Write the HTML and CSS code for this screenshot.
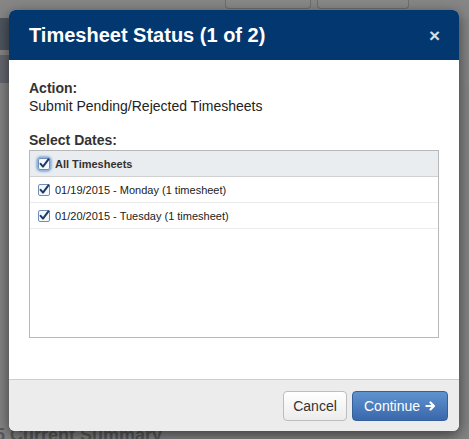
FILE: index.html
```html
<!DOCTYPE html>
<html>
<head>
<meta charset="utf-8">
<link rel="stylesheet" href="styles.css">
</head>
<body>
<div class="page">
  <div class="topbar">
    <span class="bgbtn bgbtn1"></span>
    <span class="bgbtn bgbtn2"></span>
  </div>
  <div class="navband"></div>
  <div class="navline"></div>
  <div class="subband"></div>
  <div class="spacer"></div>
  <div class="bgheading">5 Current Summary</div>
</div>
<div class="overlay"></div>
<div class="modal">
  <div class="modal-header">
    <h1 class="modal-title">Timesheet Status (1 of 2)</h1>
    <span class="close">&#215;</span>
  </div>
  <div class="modal-body">
    <div class="label">Action:</div>
    <div class="value">Submit Pending/Rejected Timesheets</div>
    <div class="label label-dates">Select Dates:</div>
    <div class="listbox">
      <div class="list-head">
        <span class="cb cb-focus"><svg viewBox="0 0 12 12" width="12" height="12"><rect x="0.5" y="0.5" width="11" height="11" rx="1.5" fill="#f4f8fd" stroke="#6f8fb8"/><path d="M2.6 5.8 L5 8.6 L10.6 1.2" fill="none" stroke="#1d3a66" stroke-width="2" stroke-linecap="round" stroke-linejoin="round"/></svg></span>
        <span class="head-text">All Timesheets</span>
      </div>
      <div class="list-row">
        <span class="cb"><svg viewBox="0 0 12 12" width="12" height="12"><rect x="0.5" y="0.5" width="11" height="11" rx="1.5" fill="#f4f8fd" stroke="#6f8fb8"/><path d="M2.6 5.8 L5 8.6 L10.6 1.2" fill="none" stroke="#1d3a66" stroke-width="2" stroke-linecap="round" stroke-linejoin="round"/></svg></span>
        <span class="row-text">01/19/2015 - Monday (1 timesheet)</span>
      </div>
      <div class="list-row">
        <span class="cb"><svg viewBox="0 0 12 12" width="12" height="12"><rect x="0.5" y="0.5" width="11" height="11" rx="1.5" fill="#f4f8fd" stroke="#6f8fb8"/><path d="M2.6 5.8 L5 8.6 L10.6 1.2" fill="none" stroke="#1d3a66" stroke-width="2" stroke-linecap="round" stroke-linejoin="round"/></svg></span>
        <span class="row-text">01/20/2015 - Tuesday (1 timesheet)</span>
      </div>
    </div>
  </div>
  <div class="modal-footer">
    <button class="btn btn-cancel">Cancel</button>
    <button class="btn btn-continue">Continue <svg class="arrow" viewBox="0 0 12 12" width="12" height="12"><path d="M1.5 6 H9.5 M6 2.2 L9.8 6 L6 9.8" fill="none" stroke="#fff" stroke-width="2.4" stroke-linecap="round" stroke-linejoin="round"/></svg></button>
  </div>
</div>
</body>
</html>
```
FILE: styles.css
```css
html, body {
  margin: 0;
  padding: 0;
  width: 469px;
  height: 439px;
  overflow: hidden;
  font-family: "Liberation Sans", Arial, Helvetica, sans-serif;
  background: #e8e8e8;
}
.page {
  width: 469px;
  height: 439px;
  display: flex;
  flex-direction: column;
  background: #f0f0f0;
}
.topbar {
  height: 18px;
  flex: none;
  display: flex;
  background: #f4f4f4;
}
.bgbtn {
  display: block;
  height: 8px;
  border: 1px solid #c8c8c8;
  border-top: none;
  border-radius: 0 0 4px 4px;
  background: #f8f8f8;
}
.bgbtn1 { margin-left: 225px; width: 84px; }
.bgbtn2 { margin-left: 6px; width: 90px; }
.navband { height: 32px; flex: none; width: 180px; background: #8f9cb0; }
.navline { height: 5px; flex: none; width: 180px; background: #f2f2f2; }
.subband { height: 28px; flex: none; width: 180px; background: #b4bcc8; }
.spacer { flex: 1; background: #efefef; }
.bgheading {
  height: 14px;
  flex: none;
  font-size: 18px;
  font-weight: bold;
  color: #a4a4a4;
  line-height: 20px;
  margin-left: -5px;
  width: 413px;
  overflow: hidden;
  background: #f0f0f0;
}
.overlay {
  position: absolute;
  left: 0;
  top: 0;
  width: 469px;
  height: 439px;
  background: rgba(0, 0, 0, 0.45);
}
.modal {
  position: absolute;
  left: 9px;
  top: 10px;
  width: 450px;
  height: 421px;
  border-radius: 6px;
  overflow: hidden;
  background: #fff;
  display: flex;
  flex-direction: column;
  box-shadow: 0 4px 14px rgba(0, 0, 0, 0.55);
}
.modal-header {
  height: 50px;
  flex: none;
  background: #03376f;
  display: flex;
  align-items: center;
  padding: 0 20px 0 20px;
}
.modal-title {
  margin: 0;
  flex: 1;
  font-size: 20px;
  font-weight: bold;
  color: #fff;
}
.close {
  color: #d5dde9;
  font-size: 19px;
  font-weight: bold;
  line-height: 1;
  margin-right: -1px;
  margin-top: 1px;
}
.modal-body {
  flex: 1;
  padding: 19px 20px 0 20px;
}
.label {
  font-size: 14px;
  font-weight: bold;
  color: #333;
  line-height: 18px;
}
.value {
  font-size: 14px;
  color: #222;
  line-height: 18px;
}
.label-dates {
  margin-top: 16px;
  margin-bottom: 1px;
}
.listbox {
  width: 408px;
  height: 186px;
  border: 1px solid #b8b8b8;
  background: #fff;
}
.list-head {
  height: 25px;
  display: flex;
  align-items: center;
  background: #eaedf0;
  border-bottom: 1px solid #d0d0d0;
  padding-left: 8px;
}
.list-row {
  height: 25px;
  display: flex;
  align-items: center;
  border-bottom: 1px solid #ececec;
  padding-left: 8px;
}
.cb {
  width: 12px;
  height: 12px;
  display: block;
  margin-right: 5px;
}
.cb svg { display: block; }
.cb-focus {
  border-radius: 3px;
  box-shadow: 0 0 2px 2px rgba(74, 130, 200, 0.55);
}
.head-text {
  font-size: 11px;
  font-weight: bold;
  color: #333;
}
.row-text {
  font-size: 11px;
  color: #222;
}
.modal-footer {
  height: 51px;
  flex: none;
  background: #ececec;
  border-top: 1px solid #cdcdcd;
  display: flex;
  align-items: center;
  justify-content: flex-end;
  padding-right: 11px;
  gap: 5px;
}
.btn {
  height: 30px;
  border-radius: 4px;
  font-family: "Liberation Sans", Arial, Helvetica, sans-serif;
  font-size: 14px;
  padding: 0 11px;
  display: flex;
  align-items: center;
}
.btn-cancel {
  width: 64px;
  justify-content: center;
  color: #333;
  background: linear-gradient(#ffffff, #ececec);
  border: 1px solid #bdbdbd;
}
.btn-continue {
  width: 96px;
  justify-content: center;
  color: #fff;
  background: linear-gradient(#5f93cf, #3a68ab);
  border: 1px solid #34609c;
  gap: 5px;
}
.arrow { display: block; }
```
